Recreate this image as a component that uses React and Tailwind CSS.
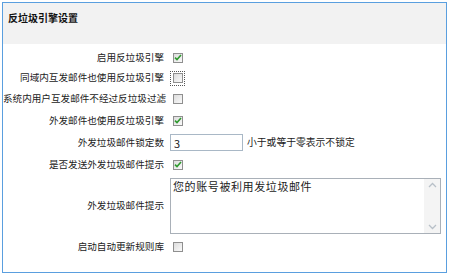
import React from "react";

const font = { fontFamily: '"Noto Sans CJK SC", "Noto Sans", sans-serif' };

const Check = ({ checked, focus }) => {
  const box = (
    <span className="flex h-[10px] w-[10px] items-center justify-center border border-[#8f8f8f] bg-gradient-to-br from-[#dcdcdc] to-[#fafafa]">
      {checked && (
        <svg width="8" height="7" viewBox="0 0 8 7">
          <path d="M1 3.6 L3 5.6 L7 1" fill="none" stroke="#2f9a2f" strokeWidth="1.6" />
        </svg>
      )}
    </span>
  );
  if (focus)
    return (
      <span className="flex h-[15px] w-[15px] items-center justify-center border border-dotted border-[#555]">
        {box}
      </span>
    );
  return <span className="flex h-[15px] w-[15px] items-center justify-center">{box}</span>;
};

const Row = ({ label, h, children }) => (
  <div className={`flex items-center ${h}`}>
    <div className="w-[161px] shrink-0 whitespace-nowrap text-right text-[9.6px] leading-none text-[#222]">{label}</div>
    <div className="ml-[6px] flex items-center">{children}</div>
  </div>
);

export default function App() {
  return (
    <div className="h-[275px] w-[469px] bg-white pl-[2px] pt-[2px]" style={font}>
      <div className="h-[271px] w-[445px] border border-[#5a9fdf] bg-white">
        <div className="h-[41px] bg-[#f2f2f2] pl-[5px] pt-[10px] text-[10px] font-bold leading-none text-[#111]">
          反垃圾引擎设置
        </div>
        <div className="pt-[3px]">
          <Row label="启用反垃圾引擎" h="h-[21px]">
            <Check checked />
          </Row>
          <Row label="同域内互发邮件也使用反垃圾引擎" h="h-[20px]">
            <Check focus />
          </Row>
          <Row label="系统内用户互发邮件不经过反垃圾过滤" h="h-[22px]">
            <Check />
          </Row>
          <Row label="外发邮件也使用反垃圾引擎" h="h-[21px]">
            <Check checked />
          </Row>
          <Row label="外发垃圾邮件锁定数" h="h-[23px]">
            <input
              readOnly
              value="3"
              className="h-[17px] w-[73px] border border-[#a9b8c6] px-[3px] text-[11px] text-[#222] outline-none"
            />
            <span className="ml-[4px] text-[9.8px] leading-none text-[#222]">小于或等于零表示不锁定</span>
          </Row>
          <Row label="是否发送外发垃圾邮件提示" h="h-[21px]">
            <Check checked />
          </Row>
          <Row label="外发垃圾邮件提示" h="h-[61px]">
            <div className="flex h-[56px] w-[271px] border border-[#a9b0b8]">
              <div className="flex-1 px-[2px] pt-[2px] text-[11px] leading-none tracking-[0.6px] text-[#222]">
                您的账号被利用发垃圾邮件
              </div>
              <div className="flex w-[16px] flex-col items-center justify-between bg-[#f4f4f4] py-[3px]">
                <svg width="9" height="6" viewBox="0 0 9 6">
                  <path d="M1 5 L4.5 1.5 L8 5" fill="none" stroke="#b8c0c8" strokeWidth="1.3" />
                </svg>
                <svg width="9" height="6" viewBox="0 0 9 6">
                  <path d="M1 1 L4.5 4.5 L8 1" fill="none" stroke="#b8c0c8" strokeWidth="1.3" />
                </svg>
              </div>
            </div>
          </Row>
          <Row label="启动自动更新规则库" h="h-[21px]">
            <Check />
          </Row>
        </div>
      </div>
    </div>
  );
}
